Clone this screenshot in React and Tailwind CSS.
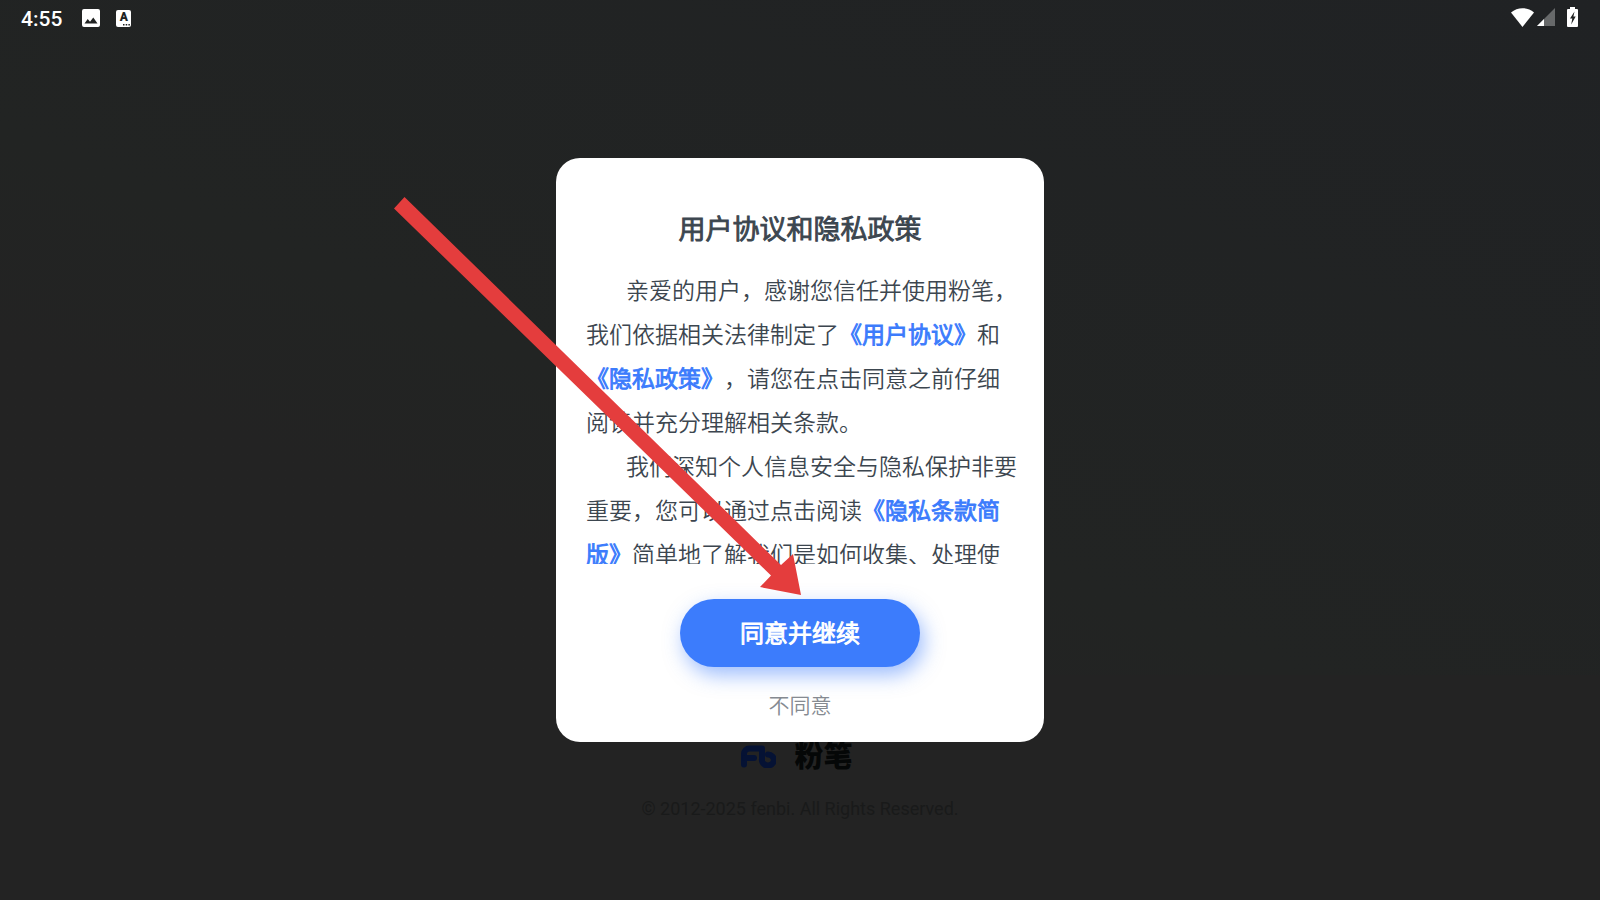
const TERMS = [
  { text: "亲爱的用户，感谢您信任并使用粉笔，我们依据相关法律制定了" },
  { text: "《用户协议》", href: "#agreement" },
  { text: "和" },
  { text: "《隐私政策》", href: "#privacy" },
  { text: "，请您在点击同意之前仔细阅读并充分理解相关条款。" },
];

const SUMMARY = [
  { text: "我们深知个人信息安全与隐私保护非要重要，您可以通过点击阅读" },
  { text: "《隐私条款简版》", href: "#privacy-summary" },
  { text: "简单地了解我们是如何收集、处理使" },
];

const StatusBar = () => (
  <header className="relative z-20 flex items-start justify-between px-[21px] text-white">
    <div className="flex items-center">
      <time className="text-[21px] leading-[38px] font-medium">4:55</time>
      <svg viewBox="0 0 18 18" className="ml-5 mb-0.5 w-[18px] h-[18px]" aria-hidden="true">
        <path
          fillRule="evenodd"
          fill="currentColor"
          d="M2 0h14a2 2 0 0 1 2 2v14a2 2 0 0 1-2 2H2a2 2 0 0 1-2-2V2a2 2 0 0 1 2-2zM2.500 14.500h13L11.300 8.500 8 12.700 5.700 10z"
        />
      </svg>
      <span className="relative flex justify-center ml-4 mb-px w-[15px] h-[17px] rounded-[2px] bg-white text-[#202222] text-[12px] leading-[15px] font-black">
        A
        <svg viewBox="0 0 7 2" className="absolute right-[1px] bottom-[1px] w-[7px] h-[2px]" aria-hidden="true">
          <path fill="#202222" d="M0 0h1.500v1.500H0zM2.700 0h1.500v1.500H2.700zM5.400 0h1.500v1.500H5.400z" />
        </svg>
      </span>
    </div>
    <div className="flex items-center h-[34px]">
      <svg viewBox="0 0 23 19" className="w-[23px] h-[19px]" aria-hidden="true">
        <path fill="currentColor" d="M0 4.500C6.500-1.300 16.500-1.300 23 4.500L11.500 19z" />
      </svg>
      <svg viewBox="0 0 18 18" className="ml-[3px] w-[18px] h-[18px]" aria-hidden="true">
        <path fill="#67696a" d="M18 0v18H0z" />
        <path fill="currentColor" d="M7 11v7H0z" />
      </svg>
      <svg viewBox="0 0 11 20" className="ml-3 mr-px w-[11px] h-5" aria-hidden="true">
        <path fill="currentColor" d="M3 0h5v2h2a1 1 0 0 1 1 1v16a1 1 0 0 1-1 1H1a1 1 0 0 1-1-1V3a1 1 0 0 1 1-1h2z" />
        <path fill="#202222" d="M7.500 4.500L3 11.500h2.300L4.200 17.500 8.700 9.500H6.400z" />
      </svg>
    </div>
  </header>
);

const Paragraph = ({ parts }) => (
  <p className="indent-10">
    {parts.map((part) =>
      part.href ? (
        <a key={part.text} href={part.href} className="text-[#3c7cfc] [-webkit-text-stroke:1px_#3c7cfc]">
          {part.text}
        </a>
      ) : (
        part.text
      )
    )}
  </p>
);

const Arrow = () => (
  <svg
    viewBox="0 0 408 400"
    className="absolute -left-[163px] top-[38px] w-[408px] h-[400px] pointer-events-none"
    aria-hidden="true"
  >
    <path fill="#e43d3d" d="M1 12.500L11.500 1 388 369 400 358 408 399 367 391 378 379.500z" />
  </svg>
);

const ConsentDialog = () => (
  <div className="absolute inset-0 z-10 flex items-center justify-center">
    <section
      role="dialog"
      aria-labelledby="consent-title"
      className="relative flex flex-col items-center w-[488px] pt-[50px] pb-[18px] rounded-3xl bg-white text-[#3c464f] font-[350]"
    >
      <h1 id="consent-title" className="text-[27px] leading-[44px] font-[350] [-webkit-text-stroke:1px_#3c464f]">
        用户协议和隐私政策
      </h1>
      <div className="mt-[18px] h-[294px] w-full pl-[30px] pr-[26px] overflow-hidden text-[23px] leading-[44px] [text-spacing-trim:space-all]">
        <Paragraph parts={TERMS} />
        <Paragraph parts={SUMMARY} />
      </div>
      <button
        type="button"
        className="mt-[35px] h-[68px] w-60 pt-0.5 rounded-full bg-[#3c7cfc] text-2xl font-[350] text-white [-webkit-text-stroke:1px_#fff] shadow-[4px_8px_20px_rgba(60,124,252,0.5)]"
      >
        同意并继续
      </button>
      <button type="button" className="mt-[21px] px-4 text-[21px] leading-9 font-[350] text-[#858a91]">
        不同意
      </button>
      <Arrow />
    </section>
  </div>
);

const BrandFooter = () => (
  <footer className="flex flex-col items-center pb-[77px]">
    <div className="flex items-center gap-[18px] pr-[6px]">
      <svg viewBox="0 0 35 23" className="mb-0.5 w-[35px] h-[23px]" fill="none" stroke="#051234" strokeWidth="6" strokeLinecap="round" strokeLinejoin="round" aria-hidden="true">
        <path d="M3 19.500V9a5.500 5.500 0 0 1 5.500-5.500H21V14a6 5.500 0 1 0 6-4.500" />
        <path d="M4 13h9" />
      </svg>
      <span className="text-[29px] leading-[44px] font-black text-[#050707]">粉笔</span>
    </div>
    <p className="mt-4 text-lg leading-7 text-[#191a1a]">
      © 2012-2025 fenbi. All Rights Reserved.
    </p>
  </footer>
);

const App = () => {
  return (
    <main
      lang="zh-CN"
      className="relative flex flex-col justify-between min-h-screen overflow-hidden bg-[#232323] font-[Roboto,'Noto_Sans_CJK_SC',sans-serif]"
    >
      <div className="absolute inset-x-0 top-0 h-3/4 bg-linear-to-bl from-[#202224] via-[#222423] via-60% to-[#232323] to-75%" />
      <StatusBar />
      <ConsentDialog />
      <BrandFooter />
    </main>
  );
};

export default App;
